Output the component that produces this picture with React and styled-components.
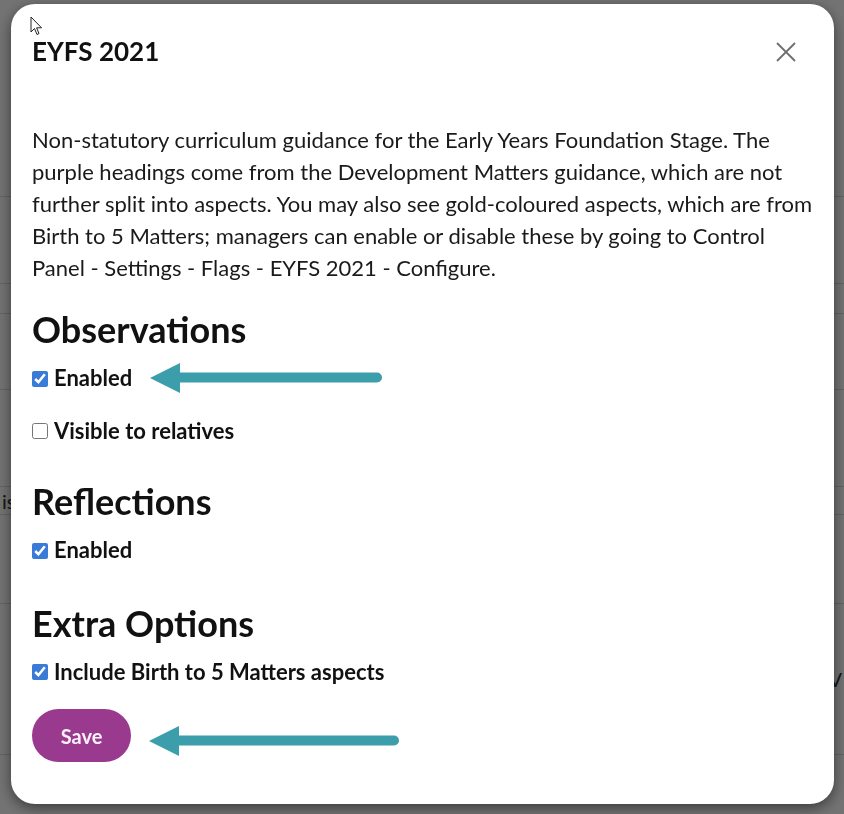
import React from "react";
import styled, { createGlobalStyle } from "styled-components";

const GlobalStyle = createGlobalStyle`
  html, body {
    margin: 0;
    padding: 0;
  }
  body {
    background: #ffffff;
    font-family: Lato, "Open Sans", sans-serif;
    color: #111;
  }
`;

// the page that sits behind the dialog
const Page = styled.div`
  display: flex;
  flex-direction: column;
  height: 814px;
  overflow: hidden;
  padding-top: 170px;
  box-sizing: border-box;
`;

const PageRow = styled.div`
  height: ${p => p.h}px;
  border-bottom: 1px solid #dcdcdc;
  font-size: 20px;
  color: #333;
  display: flex;
  align-items: center;
  justify-content: space-between;
  padding: 0 2px;
`;

const Overlay = styled.div`
  position: fixed;
  inset: 0;
  background: rgba(0, 0, 0, 0.55);
  display: flex;
  justify-content: center;
  align-items: flex-start;
  padding-top: 4px;
`;

const Modal = styled.div`
  position: relative;
  width: 823px;
  height: 800px;
  box-sizing: border-box;
  margin-left: 1px;
  background: #fff;
  border-radius: 24px;
  box-shadow: 0 4px 14px rgba(0, 0, 0, 0.5);
  padding: 32px 21px 0 21px;
  display: flex;
  flex-direction: column;
`;

const Header = styled.div`
  display: flex;
  justify-content: space-between;
  align-items: center;
`;

const Title = styled.h1`
  margin: 0;
  font-size: 26px;
  line-height: 1.2;
  font-weight: 700;
  color: #111;
`;

const CloseButton = styled.button`
  border: 0;
  background: none;
  padding: 0;
  margin-right: 17px;
  width: 20px;
  height: 20px;
  display: flex;
  cursor: pointer;
`;

const Intro = styled.p`
  margin: 57px 0 24px;
  font-size: 22px;
  line-height: 32px;
  color: #1a1a1a;
`;

const Heading = styled.h2`
  margin: 0 0 14px;
  font-size: 36px;
  line-height: 1.2;
  font-weight: 700;
  color: #111;
`;

const OptionList = styled.div`
  display: flex;
  flex-direction: column;
  gap: 26px;
  margin-bottom: ${p => p.after || 36}px;
`;

const OptionRow = styled.label`
  display: flex;
  align-items: center;
  gap: 6px;
  font-size: 22px;
  line-height: 1.2;
  font-weight: 700;
  color: #111;
`;

const Check = styled.input`
  width: 16px;
  height: 16px;
  margin: 0;
  accent-color: #3a7bd8;
`;

// negative block margins so the arrow never makes its row taller
const Arrow = styled.svg`
  margin: ${p => (p.drop || 0) - 3}px 0 -3px ${p => p.gap}px;
  flex-shrink: 0;
`;

const Footer = styled.div`
  display: flex;
  align-items: center;
`;

const SaveButton = styled.button`
  width: 99px;
  height: 53px;
  border: 0;
  border-radius: 27px;
  background: #993a8e;
  color: #fbf2f9;
  font-family: Lato, sans-serif;
  font-size: 20px;
  font-weight: 700;
  cursor: pointer;
`;

const Cursor = styled.svg`
  position: absolute;
  left: 19px;
  top: 12px;
`;

const TealArrow = ({ length, gap, drop }) => (
  <Arrow gap={gap} drop={drop} width={length} height={32} viewBox={`0 0 ${length} 32`}>
    <polygon points="0,15 30,0 30,30" fill="#3c9dab" />
    <line x1="29" y1="14.5" x2={length - 5} y2="14.5" stroke="#3c9dab" strokeWidth="10" strokeLinecap="round" />
  </Arrow>
);

const Option = ({ label, checked, arrow }) => (
  <OptionRow>
    <Check type="checkbox" defaultChecked={checked} />
    {label}
    {arrow && <TealArrow length={232} gap={12} />}
  </OptionRow>
);

export default function App() {
  return (
    <>
      <GlobalStyle />
      <Page>
        <PageRow h={26} />
        <PageRow h={86} />
        <PageRow h={29} />
        <PageRow h={75} />
        <PageRow h={96} />
        <PageRow h={27}>
          <span>is</span>
        </PageRow>
        <PageRow h={88} />
        <PageRow h={150}>
          <span />
          <span>V</span>
        </PageRow>
      </Page>
      <Overlay>
        <Modal>
          <Cursor width="13" height="20" viewBox="0 0 13 20">
            <path d="M1 1 L1 16 L4.5 12.5 L7 18.5 L9 17.6 L6.6 11.8 L11.5 11.8 Z" fill="#fff" stroke="#222" strokeWidth="1" strokeLinejoin="round" />
          </Cursor>
          <Header>
            <Title>EYFS 2021</Title>
            <CloseButton aria-label="Close">
              <svg width="20" height="20" viewBox="0 0 20 20">
                <path d="M1 1 L19 19 M19 1 L1 19" stroke="#6e6e6e" strokeWidth="1.8" />
              </svg>
            </CloseButton>
          </Header>
          <Intro>
            Non-statutory curriculum guidance for the Early Years Foundation Stage. The purple headings
            come from the Development Matters guidance, which are not further split into aspects. You
            may also see gold-coloured aspects, which are from Birth to 5 Matters; managers can enable
            or disable these by going to Control Panel - Settings - Flags - EYFS 2021 - Configure.
          </Intro>

          <Heading>Observations</Heading>
          <OptionList>
            <Option label="Enabled" checked arrow />
            <Option label="Visible to relatives" />
          </OptionList>

          <Heading>Reflections</Heading>
          <OptionList after={38}>
            <Option label="Enabled" checked />
          </OptionList>

          <Heading>Extra Options</Heading>
          <OptionList after={24}>
            <Option label="Include Birth to 5 Matters aspects" checked />
          </OptionList>

          <Footer>
            <SaveButton>Save</SaveButton>
            <TealArrow length={250} gap={18} drop={12} />
          </Footer>
        </Modal>
      </Overlay>
    </>
  );
}
